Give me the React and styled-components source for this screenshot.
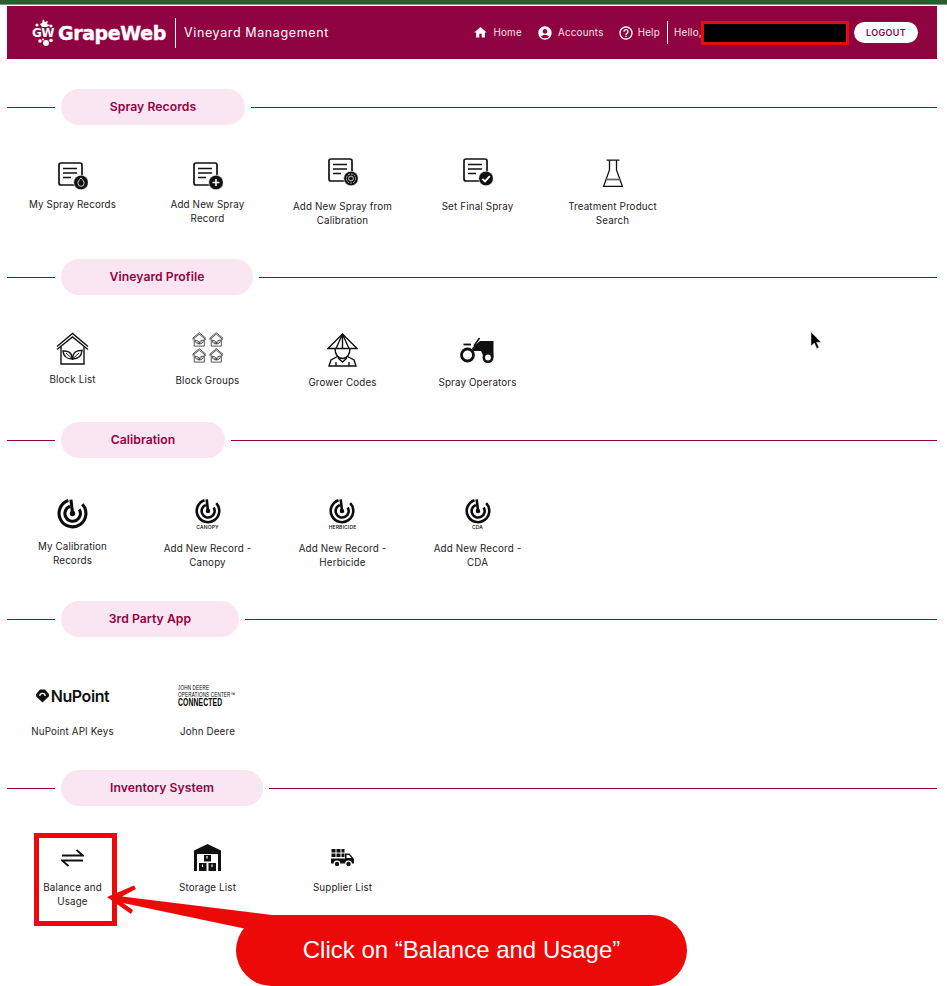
import React from "react";
import styled, { createGlobalStyle } from "styled-components";
import { MdHome, MdAccountCircle, MdHelpOutline } from "react-icons/md";

const WINE = "#8f0340";
const RED = "#eb0a08";

const Global = createGlobalStyle`
  html, body { margin: 0; padding: 0; background: #fff; }
  body { font-family: Inter, "Open Sans", "Liberation Sans", sans-serif; }
`;

const Page = styled.div`
  position: relative;
  width: 947px;
  height: 986px;
  overflow: hidden;
  background: #fff;
`;
const TopStrip = styled.div`
  height: 5px;
  background: #2a5e2c;
  border-bottom: 1px solid #7f9a80;
  box-sizing: border-box;
  margin-bottom: 1px;
`;
const Content = styled.div`
  padding: 0 10px 0 7px;
`;
const Header = styled.header`
  height: 53px;
  background: ${WINE};
  display: flex;
  align-items: center;
  color: #fff;
  padding: 0 19px 0 24px;
`;
const Brand = styled.div`
  display: flex;
  align-items: center;
`;
const BrandName = styled.span`
  font-family: "DejaVu Sans", sans-serif;
  font-weight: 700;
  font-size: 19px;
  letter-spacing: -0.4px;
  -webkit-text-stroke: 0.4px #fff;
  margin-left: 1px;
  width: 117px;
`;
const LogoMark = styled.div`
  position: relative;
  width: 26px;
  height: 27px;
`;
const LogoLetters = styled.span`
  position: absolute;
  left: -3px;
  top: 7px;
  width: 30px;
  text-align: center;
  font-family: "DejaVu Sans", sans-serif;
  font-weight: 700;
  font-size: 12px;
  letter-spacing: -0.5px;
`;
const VBar = styled.div`
  width: 1px;
  height: ${(p) => p.$h}px;
  background: #fff;
`;
const AppName = styled.span`
  margin-left: 8px;
  font-size: 12.5px;
  font-weight: 400;
  letter-spacing: 0.62px;
`;
const Nav = styled.nav`
  margin-left: auto;
  display: flex;
  align-items: center;
  font-size: 9.8px;
  letter-spacing: 0.25px;
  color: #f5e3ec;
`;
const NavLink = styled.a`
  display: flex;
  align-items: center;
  gap: ${(p) => p.$gap}px;
  margin-right: ${(p) => p.$mr}px;
  svg { color: #fff; flex: none; }
`;
const Hello = styled.span`
  margin-left: 6px;
  width: 27px;
  white-space: nowrap;
`;
const Redacted = styled.div`
  box-sizing: border-box;
  width: 148px;
  height: 24px;
  background: #000;
  border: 3px solid ${RED};
`;
const Logout = styled.button`
  margin-left: 5px;
  width: 64px;
  height: 21px;
  border: 0;
  padding: 0;
  border-radius: 11px;
  background: #fff;
  color: ${WINE};
  font-family: inherit;
  font-size: 9px;
  font-weight: 600;
  letter-spacing: 0.3px;
`;
const Section = styled.section`
  height: ${(p) => p.$h}px;
  &:first-of-type { margin-top: 30px; }
`;
const SectionHead = styled.div`
  display: flex;
  align-items: center;
  gap: 6px;
  height: 36px;
`;
const Rule = styled.div`
  height: 1px;
  background: ${WINE};
  flex: ${(p) => (p.$grow ? 1 : "none")};
  width: ${(p) => (p.$grow ? "auto" : "48px")};
`;
const Pill = styled.div`
  box-sizing: border-box;
  width: ${(p) => p.$w}px;
  height: 36px;
  padding-bottom: 1px;
  border-radius: 18px;
  background: #fae6f3;
  color: ${WINE};
  font-size: 12.2px;
  font-weight: 600;
  letter-spacing: 0.05px;
  display: flex;
  align-items: center;
  justify-content: center;
`;
const Row = styled.div`
  display: grid;
  grid-template-columns: repeat(5, 131px);
  column-gap: 4px;
`;
const Tile = styled.a`
  padding-top: ${(p) => p.$pt}px;
  display: flex;
  flex-direction: column;
  align-items: center;
  color: #1c1c1c;
`;
const IconBox = styled.div`
  height: ${(p) => p.$ih}px;
  display: flex;
  flex-direction: column;
  align-items: center;
`;
const Label = styled.div`
  padding-top: 1px;
  font-size: 9.8px;
  line-height: 14.4px;
  letter-spacing: 0.15px;
  text-align: center;
  white-space: pre-line;
`;
const MicroLabel = styled.div`
  font-size: 5px;
  line-height: 6px;
  font-weight: 500;
  letter-spacing: 0.15px;
  color: #000;
`;
const NuLogo = styled.div`
  display: flex;
  align-items: center;
  gap: 2px;
  color: #111;
  font-size: 16px;
  font-weight: 600;
  letter-spacing: -0.4px;
  line-height: 16px;
`;
const DeereLogo = styled.div`
  width: 60px;
  height: 24px;
  color: #000;
  font-family: "Liberation Sans", sans-serif;
`;
const DeereLine = styled.div`
  width: ${(p) => p.$w}px;
  height: ${(p) => p.$lh}px;
  overflow: visible;
  transform: scaleX(${(p) => p.$sx});
  transform-origin: left center;
  white-space: nowrap;
  font-size: ${(p) => p.$size}px;
  line-height: ${(p) => p.$lh}px;
  font-weight: ${(p) => (p.$bold ? 700 : 400)};
  letter-spacing: 0.2px;
`;
const RedBox = styled.div`
  position: absolute;
  left: 34px;
  top: 833px;
  width: 83px;
  height: 93px;
  border: 5px solid ${RED};
  box-sizing: border-box;
`;
const Overlay = styled.svg`
  position: absolute;
  left: 0;
  top: 0;
  pointer-events: none;
`;
const Callout = styled.div`
  position: absolute;
  left: 236px;
  top: 915px;
  width: 451px;
  height: 71px;
  border-radius: 36px;
  background: ${RED};
  color: #fff;
  font-family: "Liberation Sans", sans-serif;
  font-size: 24px;
  display: flex;
  align-items: center;
  justify-content: center;
  padding-bottom: 2px;
  box-sizing: border-box;
`;

/* ---------- drawings ---------- */
const Doc = ({ children }) => (
  <svg width="30" height="28" viewBox="0 0 30 28" fill="none">
    <rect x="1" y="1" width="23" height="22" rx="2" stroke="#111" strokeWidth="1.7" />
    <path d="M5 6.5H19M5 11H19M5 15.5H13" stroke="#111" strokeWidth="1.7" />
    <circle cx="23" cy="20.5" r="7.3" fill="#111" stroke="#fff" strokeWidth="0.6" />
    {children}
  </svg>
);
const DocDrop = () => (
  <Doc>
    <path d="M23 15.8c2 2.5 3.1 3.8 3.1 5.4a3.1 3.1 0 0 1-6.2 0c0-1.6 1.1-2.9 3.1-5.4z" stroke="#ddd" strokeWidth="0.9" />
  </Doc>
);
const DocPlus = () => (
  <Doc>
    <path d="M23 17v7M19.5 20.5h7" stroke="#fff" strokeWidth="1.6" />
  </Doc>
);
const DocRadar = () => (
  <Doc>
    <circle cx="23" cy="20.5" r="4.6" stroke="#bbb" strokeWidth="1" strokeDasharray="2 1" />
    <circle cx="23" cy="20.5" r="2.4" stroke="#ccc" strokeWidth="1" />
  </Doc>
);
const DocCheck = () => (
  <Doc>
    <path d="M19.4 20.8l2.6 2.6 4.8-5.2" stroke="#fff" strokeWidth="1.9" />
  </Doc>
);
const Flask = () => (
  <svg width="22" height="29" viewBox="0 0 22 29" fill="none" stroke="#111" strokeWidth="1.3">
    <path d="M4.500 1.200H17.500M7.500 1.200V11L1.600 27.400H20.400L14.500 11V1.200" />
    <path d="M3.800 20.500H18.200" strokeWidth="1.800" stroke="#666" />
  </svg>
);
const houseParts = (sw) => (
  <>
    <path d="M1 14.5L16.5 1.5L32 14.5" strokeWidth={sw} />
    <path d="M1 17.5L16.5 5L32 17.5" strokeWidth={sw} />
    <path d="M5 14.5V32H28V14.5" strokeWidth={sw} />
    <path d="M16.5 27c-5.5 0-9-2.5-9.5-8 5-.5 9 1.5 9.500 8z" strokeWidth={sw} />
    <path d="M16.5 27c5.5 0 9-2.5 9.5-8.5-5.200-.5-9 1.500-9.500 8.500z" strokeWidth={sw} />
    <path d="M10 21l6.500 6M23 21l-6.500 6" strokeWidth={sw * 0.7} />
  </>
);
const House = () => (
  <svg width="33" height="33" viewBox="0 0 33 33" fill="none" stroke="#111">
    {houseParts(1.4)}
  </svg>
);
const HouseGrid = () => (
  <svg width="32" height="31" viewBox="0 0 32 31" fill="none" stroke="#333">
    {[[0, 0], [17, 0], [0, 16], [17, 16]].map(([x, y]) => (
      <g key={`${x}-${y}`} transform={`translate(${x} ${y}) scale(0.44)`}>
        {houseParts(1.9)}
      </g>
    ))}
  </svg>
);
const Grower = () => (
  <svg width="31" height="34" viewBox="0 0 31 34" fill="none" stroke="#111" strokeWidth="1.4">
    <path d="M15.500 1L1 15.500H30Z" />
    <path d="M15.500 1L9 15.500M15.500 1L22 15.500M15.500 1V15.500" />
    <path d="M8 15.500c0 6 3 10 7.500 10s7.500-4 7.500-10" />
    <path d="M10.500 23.500L4 27l-2 6H29l-2-6-6.500-3.500" />
    <path d="M11 25l4.500 4 4.500-4M9 33V29M22 33V29" />
  </svg>
);
const Tractor = () => (
  <svg width="35" height="26" viewBox="0 0 35 26" fill="none">
    <path d="M12 11L20 4H33.500V20.500H24L21 14H13Z" fill="#111" />
    <path d="M14 9L19.500 1" stroke="#111" strokeWidth="1.600" />
    <path d="M3.500 7.500H11" stroke="#111" strokeWidth="1.800" />
    <circle cx="7.500" cy="18" r="6" stroke="#111" strokeWidth="2.800" fill="#fff" />
    <circle cx="28" cy="20.500" r="4.200" stroke="#111" strokeWidth="2.600" fill="#fff" />
  </svg>
);
const Radar = ({ size }) => (
  <svg width={size} height={size} viewBox="0 0 30 30" fill="none" stroke="#0c0c0c" strokeWidth="3">
    <path d="M11 2.500A13 13 0 1 0 24.500 6" />
    <path d="M12.500 8A7.500 7.500 0 1 0 21.500 11" />
    <path d="M13.500 1.500L15 15" />
    <circle cx="15" cy="15" r="2.600" fill="#0c0c0c" stroke="none" />
  </svg>
);
const Swap = () => (
  <svg width="23" height="18" viewBox="0 0 23 18" fill="none" stroke="#111" strokeWidth="1.800">
    <path d="M1 6.500H22L15.500 1" />
    <path d="M22 11.500H1L7.500 17" />
  </svg>
);
const Storage = () => (
  <svg width="27" height="27" viewBox="0 0 27 27" fill="#111">
    <path fillRule="evenodd" d="M13.500 0L27 6.500V27H24V10H3V27H0V6.500Z" />
    <rect x="10" y="11" width="7" height="6.500" />
    <rect x="5" y="19" width="7.500" height="8" />
    <rect x="14.500" y="19" width="7.500" height="8" />
    <path d="M13 12v2.500M8.500 20.500v2.500M18 20.500v2.500" stroke="#fff" strokeWidth="1.200" />
  </svg>
);
const Truck = () => (
  <svg width="23" height="18" viewBox="0 0 23 18" fill="#111">
    <rect x="0.500" y="0" width="4" height="3.500" />
    <rect x="5.500" y="0" width="4" height="3.500" />
    <rect x="10.500" y="0" width="3" height="3.500" />
    <rect x="0.500" y="4.500" width="4" height="3.500" />
    <rect x="5.500" y="4.500" width="4" height="3.500" />
    <rect x="10.500" y="4.500" width="3" height="3.500" />
    <path d="M0 9.500H14V4.500H18.500L23 10V14.500H0Z" />
    <circle cx="6" cy="15" r="2.800" stroke="#fff" strokeWidth="1.200" />
    <circle cx="17.500" cy="15" r="2.800" stroke="#fff" strokeWidth="1.200" />
    <path d="M15.500 6H18L20.500 9H15.500Z" fill="#fff" />
  </svg>
);
const GrapeMark = () => (
  <LogoMark>
    <svg width="26" height="27" viewBox="0 0 26 27" fill="#fff">
      <path d="M12 0l2 3 3-1-1 3 3 1-3 2h-5L9 5l2-1z" />
      <circle cx="6" cy="6" r="1.600" />
      <circle cx="20" cy="7" r="1.600" />
      <circle cx="15" cy="24" r="3" />
      <circle cx="9" cy="22" r="1.800" />
      <circle cx="20" cy="21.500" r="1.800" />
      <circle cx="12" cy="20.500" r="1" />
    </svg>
    <LogoLetters>GW</LogoLetters>
  </LogoMark>
);
const NuMark = () => (
  <svg width="13" height="14" viewBox="0 0 13 14" fill="#111">
    <path d="M4 0.500H9L12.500 4.500C13.500 6 13 7 12.300 8L6.500 13.500L0.700 8C0 7 -0.500 6 0.500 4.500Z" />
    <path d="M3.800 7a2.700 2.700 0 0 1 5.400 0" stroke="#fff" strokeWidth="1.300" fill="none" />
  </svg>
);
const Cursor = () => (
  <Overlay width="947" height="986" viewBox="0 0 947 986">
    <path d="M811 332V346L814.300 343L816.800 348.500L819 347.500L816.500 342.300H821Z" fill="#000" stroke="#ddd" strokeWidth="0.500" />
  </Overlay>
);
const Arrow = () => (
  <Overlay width="947" height="986" viewBox="0 0 947 986">
    <path
      d="M107 897L134 885.500L136 889L122 896.500L272 915L256 931L123 903L133 910L131 914Z"
      fill={RED}
    />
  </Overlay>
);

const sections = [
  {
    title: "Spray Records", w: 184, h: 170,
    tiles: [
      { label: "My Spray Records", pt: 37, ih: 35, icon: <DocDrop /> },
      { label: "Add New Spray\nRecord", pt: 37, ih: 35, icon: <DocPlus /> },
      { label: "Add New Spray from\nCalibration", pt: 33, ih: 41, icon: <DocRadar /> },
      { label: "Set Final Spray", pt: 33, ih: 41, icon: <DocCheck /> },
      { label: "Treatment Product\nSearch", pt: 34, ih: 40, icon: <Flask /> },
    ],
  },
  {
    title: "Vineyard Profile", w: 192, h: 163,
    tiles: [
      { label: "Block List", pt: 37, ih: 40, icon: <House /> },
      { label: "Block Groups", pt: 37, ih: 41, icon: <HouseGrid /> },
      { label: "Grower Codes", pt: 38, ih: 42, icon: <Grower /> },
      { label: "Spray Operators", pt: 42, ih: 38, icon: <Tractor /> },
    ],
  },
  {
    title: "Calibration", w: 164, h: 179,
    tiles: [
      { label: "My Calibration\nRecords", pt: 40, ih: 41, icon: <Radar size={31} /> },
      { label: "Add New Record -\nCanopy", pt: 40, ih: 43, icon: <Radar size={26} />, micro: "CANOPY" },
      { label: "Add New Record -\nHerbicide", pt: 40, ih: 43, icon: <Radar size={26} />, micro: "HERBICIDE" },
      { label: "Add New Record -\nCDA", pt: 40, ih: 43, icon: <Radar size={26} />, micro: "CDA" },
    ],
  },
  {
    title: "3rd Party App", w: 178, h: 169,
    tiles: [
      {
        label: "NuPoint API Keys", pt: 51, ih: 36,
        icon: (
          <NuLogo>
            <NuMark />
            NuPoint
          </NuLogo>
        ),
      },
      {
        label: "John Deere", pt: 47, ih: 40,
        icon: (
          <DeereLogo>
            <DeereLine $w={60} $size={6.6} $lh={7} $sx={0.7}>JOHN DEERE</DeereLine>
            <DeereLine $w={90} $size={6.6} $lh={7} $sx={0.7}>OPERATIONS CENTER™</DeereLine>
            <DeereLine $w={70} $size={10} $lh={10} $sx={0.68} $bold>CONNECTED</DeereLine>
          </DeereLogo>
        ),
      },
    ],
  },
  {
    title: "Inventory System", w: 202, h: 180,
    tiles: [
      { label: "Balance and\nUsage", pt: 43, ih: 31, icon: <Swap /> },
      { label: "Storage List", pt: 38, ih: 36, icon: <Storage /> },
      { label: "Supplier List", pt: 43, ih: 31, icon: <Truck /> },
    ],
  },
];

export default function App() {
  return (
    <Page>
      <Global />
      <TopStrip />
      <Content>
        <Header>
          <Brand>
            <GrapeMark />
            <BrandName>GrapeWeb</BrandName>
            <VBar $h={30} />
            <AppName>Vineyard Management</AppName>
          </Brand>
          <Nav>
            <NavLink $gap={5} $mr={15}><MdHome size={15} />Home</NavLink>
            <NavLink $gap={5} $mr={14}><MdAccountCircle size={16} />Accounts</NavLink>
            <NavLink $gap={4} $mr={7}><MdHelpOutline size={16} />Help</NavLink>
            <VBar $h={23} />
            <Hello>Hello,</Hello>
            <Redacted />
            <Logout>LOGOUT</Logout>
          </Nav>
        </Header>
        {sections.map((s) => (
          <Section key={s.title} $h={s.h}>
            <SectionHead>
              <Rule />
              <Pill $w={s.w}>{s.title}</Pill>
              <Rule $grow />
            </SectionHead>
            <Row>
              {s.tiles.map((t) => (
                <Tile key={t.label} $pt={t.pt}>
                  <IconBox $ih={t.ih}>
                    {t.icon}
                    {t.micro && <MicroLabel>{t.micro}</MicroLabel>}
                  </IconBox>
                  <Label>{t.label}</Label>
                </Tile>
              ))}
            </Row>
          </Section>
        ))}
      </Content>
      <RedBox />
      <Arrow />
      <Callout>Click on “Balance and Usage”</Callout>
      <Cursor />
    </Page>
  );
}
